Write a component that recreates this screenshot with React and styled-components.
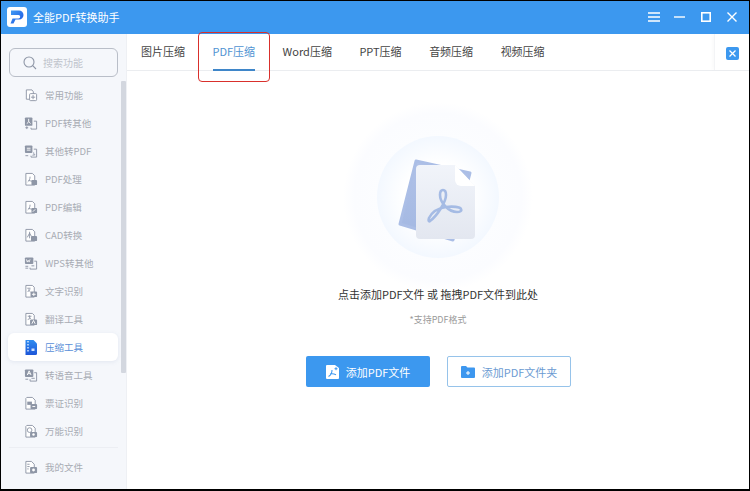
import React from 'react';
import styled, { createGlobalStyle } from 'styled-components';

const GlobalStyle = createGlobalStyle`
  html, body { margin: 0; padding: 0; background: #000; }
  * { box-sizing: border-box; }
`;

const grey = '#8e96a6';

const icons = {
  common: (
    <>
      <path d="M2.500 1.500h6l1.500 2v8h-7.500z" fill="#fff" stroke={grey} />
      <rect x="6" y="5.500" width="7.500" height="7.500" rx="1" fill="#fff" stroke={grey} />
      <path d="M7.500 9.300h4.500M9.700 7v4.500" stroke={grey} />
    </>
  ),
  pdfOut: (
    <>
      <rect x="1" y="1" width="8" height="9" rx="1" fill={grey} />
      <path d="M5 2.500v3M3 7.500c1-.500 2-1.500 2-2s1 1.500 2 2" stroke="#fff" fill="none" />
      <path d="M10.500 5h3v8.500h-6v-1.500" stroke={grey} fill="none" />
      <path d="M1.500 12h3M3 10.500v3" stroke={grey} />
    </>
  ),
  pdfIn: (
    <>
      <rect x="1" y="1" width="8" height="8" rx="1" fill={grey} />
      <path d="M3 4h4M3 6h4" stroke="#fff" />
      <path d="M10.500 5h3v8.500h-6v-1.500" stroke={grey} fill="none" />
      <path d="M11 11c-.500-1-.700-2-.700-2.500M9 11.500l3-.500" stroke={grey} fill="none" />
      <path d="M1.500 12h3" stroke={grey} />
    </>
  ),
  handle: (
    <>
      <path d="M2 1h7l2.500 2.500v10h-9.500z" fill="#fff" stroke={grey} />
      <path d="M4 10c1.500-1 2.500-3 2.500-5.500M5 8.500c1 .300 3 .800 4.500 1" stroke={grey} fill="none" />
      <rect x="8" y="8" width="6" height="5.500" rx="1" fill={grey} />
    </>
  ),
  edit: (
    <>
      <path d="M2 1h7l2.500 2.500v10h-9.500z" fill="#fff" stroke={grey} />
      <path d="M4 10c1.500-1 2.500-3 2.500-5.500M5 8.500c1 .300 3 .800 4.500 1" stroke={grey} fill="none" />
      <rect x="8" y="8" width="6" height="5.500" rx="1" fill={grey} />
      <path d="M9.500 12l2.500-2.500" stroke="#fff" />
    </>
  ),
  cad: (
    <>
      <path d="M2 1h7l2.500 2.500v10h-9.500z" fill="#fff" stroke={grey} />
      <path d="M6 3.500v7M3.500 9.500L6 5l2 3.500" stroke={grey} fill="none" />
      <rect x="7.500" y="8" width="6.500" height="5.500" rx="1" fill={grey} />
    </>
  ),
  wps: (
    <>
      <rect x="1" y="1" width="9" height="7" rx="1" fill={grey} />
      <path d="M2.500 3l1 3 1-2 1 2 1-3" stroke="#fff" fill="none" strokeWidth=".8" />
      <path d="M11 5h2.500v8.500h-7v-1.500" stroke={grey} fill="none" />
      <path d="M1.500 10.500h3M1.500 12.500h3M8 10h3" stroke={grey} />
    </>
  ),
  ocr: (
    <>
      <path d="M2 1h7l2 2v10.500h-9z" fill="#fff" stroke={grey} />
      <path d="M3.500 4h3.500M4 8l2.500-3M4.500 5.500l2.500 2.500" stroke={grey} fill="none" />
      <rect x="7" y="7.500" width="7" height="6" rx="1" fill={grey} />
      <path d="M8.500 10.500h4M10.500 8.700v3.600" stroke="#fff" />
    </>
  ),
  translate: (
    <>
      <path d="M2 1h7l2 2v10.500h-9z" fill="#fff" stroke={grey} />
      <path d="M4 4h4M6 3v3M4 7.500l3.500-1.500" stroke={grey} fill="none" />
      <rect x="6.500" y="7.500" width="7.500" height="6" rx="1" fill={grey} />
      <path d="M8.500 12l1.700-3.500 1.700 3.500" stroke="#fff" fill="none" />
    </>
  ),
  voice: (
    <>
      <rect x="1" y="1" width="9" height="8" rx="1" fill={grey} />
      <path d="M3.500 7l2-4.500 2 4.500M4.300 5.500h2.400" stroke="#fff" fill="none" />
      <path d="M11 4.500h2.500v9h-7v-2" stroke={grey} fill="none" />
      <path d="M1.500 11.500h3M8 10.500h3.500" stroke={grey} />
    </>
  ),
  ticket: (
    <>
      <path d="M3 1h6l3 3v9.500h-10v-11.500z" fill="#fff" stroke={grey} />
      <rect x="3.500" y="5.500" width="5" height="3.500" fill={grey} />
      <rect x="7" y="8" width="7" height="5.500" rx="1" fill={grey} />
      <path d="M9 10.700h3" stroke="#fff" />
    </>
  ),
  any: (
    <>
      <path d="M3 1h6l3 3v9.500h-10v-11.500z" fill="#fff" stroke={grey} />
      <circle cx="6" cy="6" r="2.500" fill="#fff" stroke={grey} />
      <rect x="6.500" y="8" width="7.500" height="5.500" rx="1" fill={grey} />
      <circle cx="10.200" cy="10.700" r="1.300" fill="#fff" />
    </>
  ),
  files: (
    <>
      <path d="M2 1h6l3 3v9.500h-9z" fill="#fff" stroke={grey} />
      <path d="M3.500 4h2.500M3.500 6.500h2.500M3.500 9h1.500" stroke={grey} />
      <rect x="6.500" y="7" width="7.500" height="6.500" rx="1" fill={grey} />
      <circle cx="10.200" cy="10.200" r="1.500" fill="#fff" />
    </>
  ),
};

const CompressIcon = () => (
  <svg width="14" height="15" viewBox="0 0 14 15">
    <defs>
      <linearGradient id="cmp" x1="0" y1="0" x2="0" y2="1">
        <stop offset="0" stopColor="#2f8cf0" />
        <stop offset="1" stopColor="#1c55d8" />
      </linearGradient>
    </defs>
    <path d="M1.500 0h8l3.500 3.500v10a1.500 1.500 0 0 1-1.500 1.500h-10z" fill="url(#cmp)" />
    <path d="M4 1v1.500M4 4v1.500M4 7v1.500M4 10v1.500" stroke="#fff" strokeWidth="1.200" />
    <path d="M7.500 8.500h3v2.500h-3z" fill="#cfe2ff" />
  </svg>
);

const navItems = [
  ['common', '常用功能'],
  ['pdfOut', 'PDF转其他'],
  ['pdfIn', '其他转PDF'],
  ['handle', 'PDF处理'],
  ['edit', 'PDF编辑'],
  ['cad', 'CAD转换'],
  ['wps', 'WPS转其他'],
  ['ocr', '文字识别'],
  ['translate', '翻译工具'],
  ['compress', '压缩工具'],
  ['voice', '转语音工具'],
  ['ticket', '票证识别'],
  ['any', '万能识别'],
];

const tabs = ['图片压缩', 'PDF压缩', 'Word压缩', 'PPT压缩', '音频压缩', '视频压缩'];

const App = () => (
  <Frame>
    <GlobalStyle />
    <TitleBar>
      <Logo viewBox="0 0 20 20">
        <defs>
          <linearGradient id="logoP" x1="0" y1="0" x2="1" y2="1">
            <stop offset="0" stopColor="#3f9bf5" />
            <stop offset="1" stopColor="#1c55e0" />
          </linearGradient>
        </defs>
        <rect width="20" height="20" rx="3" fill="#fff" />
        <path d="M4 3.500h8a4.500 4.500 0 0 1 0 9H8.500L6.500 16.500H3.500l2-5h6a1.700 1.700 0 0 0 0-3.400H4z" fill="url(#logoP)" />
      </Logo>
      <AppName>全能PDF转换助手</AppName>
      <WindowButtons>
        <Hamburger width="12" height="10" viewBox="0 0 12 10"><path d="M0 1h12M0 5h12M0 9h12" stroke="#fff" strokeWidth="1.400" /></Hamburger>
        <svg width="11" height="10" viewBox="0 0 11 10"><path d="M0 5h11" stroke="#fff" strokeWidth="1.400" /></svg>
        <svg width="10" height="10" viewBox="0 0 10 10"><rect x=".8" y=".8" width="8.400" height="8.400" fill="none" stroke="#fff" strokeWidth="1.600" /></svg>
        <svg width="10" height="10" viewBox="0 0 10 10"><path d="M.5 .5l9 9M9.500 .5l-9 9" stroke="#fff" strokeWidth="1.400" /></svg>
      </WindowButtons>
    </TitleBar>
    <Body>
      <Sidebar>
        <SearchBox>
          <svg width="14" height="14" viewBox="0 0 14 14">
            <circle cx="6" cy="6" r="5" fill="none" stroke="#8e96a6" strokeWidth="1.100" />
            <path d="M9.700 9.700l3.300 3.300" stroke="#8e96a6" strokeWidth="1.100" />
          </svg>
          <SearchText>搜索功能</SearchText>
        </SearchBox>
        <NavArea>
          <NavList>
            {navItems.map(([icon, label]) => (
              <NavItem key={label} $active={icon === 'compress'}>
                {icon === 'compress' ? (
                  <CompressIcon />
                ) : (
                  <svg width="14" height="15" viewBox="0 0 15 15">{icons[icon]}</svg>
                )}
                {label}
              </NavItem>
            ))}
          </NavList>
          <ScrollThumb />
        </NavArea>
        <SideDivider />
        <FilesRow>
          <svg width="14" height="15" viewBox="0 0 15 15">{icons.files}</svg>
          我的文件
        </FilesRow>
      </Sidebar>
      <Main>
        <TabBar>
          <Tabs>
            {tabs.map((t) => (
              <Tab key={t} $active={t === 'PDF压缩'}>
                {t}
              </Tab>
            ))}
          </Tabs>
          <CollapseCell>
            <CollapseButton>
              <svg width="7" height="7" viewBox="0 0 7 7"><path d="M.5 .5l6 6M6.500 .5l-6 6" stroke="#fff" strokeWidth="1.300" /></svg>
            </CollapseButton>
          </CollapseCell>
        </TabBar>
        <Content>
          <Illustration width="190" height="190" viewBox="0 0 190 190">
            <defs>
              <radialGradient id="outer" cx="50%" cy="50%" r="50%">
                <stop offset="0.6" stopColor="#fcfdff" />
                <stop offset="0.88" stopColor="#fbfcff" />
                <stop offset="1" stopColor="#fff" />
              </radialGradient>
              <radialGradient id="inner" cx="50%" cy="50%" r="50%">
                <stop offset="0.55" stopColor="#fff" />
                <stop offset="1" stopColor="#f3f8ff" />
              </radialGradient>
              <linearGradient id="sheet" x1="0" y1="0" x2="0" y2="1">
                <stop offset="0" stopColor="#f1f4fa" />
                <stop offset="1" stopColor="#e3e7f0" />
              </linearGradient>
              <linearGradient id="back" x1="0" y1="0" x2="0" y2="1">
                <stop offset="0" stopColor="#b0c1e7" />
                <stop offset="1" stopColor="#a3b8e2" />
              </linearGradient>
            </defs>
            <circle cx="95" cy="95" r="95" fill="url(#outer)" />
            <circle cx="95" cy="95" r="61" fill="url(#inner)" />
            <polygon points="73,59 127,71 110,138 57,122" fill="url(#back)" stroke="#abbee6" strokeWidth="3" strokeLinejoin="round" />
            <path d="M77 63H112L132 84V133a4 4 0 0 1-4 4H77a4 4 0 0 1-4-4V67a4 4 0 0 1 4-4z" fill="url(#sheet)" />
            <path d="M112 63V78a6 6 0 0 0 6 6H132z" fill="#fff" />
            <path d="M87 119C94 114 103 100 103 93C103 89 101 88 100 88C98 88 97 90 97 93C97 101 106 110 114 110C117 110 119 109 118 107C117 105 110 104 103 105C96 106 89 110 86 116C85 119 86 120 87 119Z" fill="none" stroke="#a5bbe4" strokeWidth="2.600" />
          </Illustration>
          <Hint>点击添加PDF文件 或 拖拽PDF文件到此处</Hint>
          <SubHint>*支持PDF格式</SubHint>
          <Buttons>
            <PrimaryButton>
              <svg width="13" height="14" viewBox="0 0 13 14">
                <path d="M1 0h8l4 3v10a1 1 0 0 1-1 1H1a1 1 0 0 1-1-1V1a1 1 0 0 1 1-1z" fill="#fff" />
                <path d="M2.500 11.500c2-1 3.500-3.500 3.500-6.500M4 9c2-.5 4.500 0 6 .7" stroke="#3d97ef" strokeWidth="1.100" fill="none" />
                <path d="M10 2.200v3M8.500 3.700h3" stroke="#3d97ef" />
              </svg>
              添加PDF文件
            </PrimaryButton>
            <OutlineButton>
              <svg width="14" height="12" viewBox="0 0 14 12">
                <path d="M0 1a1 1 0 0 1 1-1h4l1.500 1.500H13a1 1 0 0 1 1 1V11a1 1 0 0 1-1 1H1a1 1 0 0 1-1-1z" fill="#3d97ef" />
                <path d="M5 7h4M7 5v4" stroke="#fff" />
              </svg>
              添加PDF文件夹
            </OutlineButton>
          </Buttons>
        </Content>
      </Main>
    </Body>
  </Frame>
);

const Frame = styled.div`
  width: 750px;
  height: 491px;
  padding: 1px 1px 2px 1px;
  display: flex;
  flex-direction: column;
  background: #000;
  font-family: "Noto Sans CJK SC", "Liberation Sans", sans-serif;
  overflow: hidden;
`;

const TitleBar = styled.div`
  height: 33px;
  flex: none;
  display: flex;
  align-items: center;
  padding: 0 12px 1px 6px;
  background: #3c98ef;
`;

const Logo = styled.svg`
  width: 20px;
  height: 20px;
`;

const AppName = styled.div`
  margin-left: 6px;
  font-size: 11px;
  color: #fff;
`;

const WindowButtons = styled.div`
  margin-left: auto;
  display: flex;
  align-items: center;
  gap: 16px;
`;

const Hamburger = styled.svg`
  margin-right: -2px;
`;

const Body = styled.div`
  flex: 1;
  min-height: 0;
  display: flex;
  background: #fff;
`;

const Sidebar = styled.div`
  width: 125px;
  flex: none;
  display: flex;
  flex-direction: column;
  padding-top: 14px;
  background: #f5f7fb;
`;

const SearchBox = styled.div`
  width: 109px;
  height: 29px;
  margin-left: 8px;
  flex: none;
  display: flex;
  align-items: center;
  gap: 6px;
  padding-left: 13px;
  border: 1px solid #b9bec8;
  border-radius: 6px;
`;

const SearchText = styled.span`
  font-size: 10px;
  color: #c0c4cc;
`;

const NavArea = styled.div`
  position: relative;
  margin-top: 4px;
  flex: none;
`;

const NavList = styled.div`
  display: flex;
  flex-direction: column;
`;

const NavItem = styled.div`
  width: 110px;
  height: 28px;
  margin-left: 7px;
  display: flex;
  align-items: center;
  gap: 7px;
  padding-left: 16px;
  font-size: 9.500px;
  border-radius: 6px;
  color: ${({ $active }) => ($active ? '#5a8fd8' : '#a8acb4')};
  background: ${({ $active }) => ($active ? '#fff' : 'transparent')};
  box-shadow: ${({ $active }) => ($active ? '0 1px 4px rgba(120,140,180,.15)' : 'none')};
`;

const ScrollThumb = styled.div`
  position: absolute;
  left: 120px;
  top: 0;
  width: 5px;
  height: 292px;
  background: #d3d7df;
  border-radius: 1px;
`;

const SideDivider = styled.div`
  margin: 2px 8px 0;
  height: 1px;
  background: #eceef3;
`;

const FilesRow = styled(NavItem)`
  margin-top: 5px;
`;

const Main = styled.div`
  flex: 1;
  min-width: 0;
  display: flex;
  flex-direction: column;
  border-left: 1px solid #eef0f4;
`;

const TabBar = styled.div`
  height: 37px;
  flex: none;
  display: flex;
  border-bottom: 1px solid #ebedf0;
`;

const Tabs = styled.div`
  flex: 1;
  display: flex;
  gap: 27.500px;
  padding-left: 14px;
`;

const Tab = styled.div`
  position: relative;
  height: 37px;
  padding-top: 9px;
  font-size: 11px;
  line-height: 16px;
  white-space: nowrap;
  color: ${({ $active }) => ($active ? '#4f93d2' : '#444')};
  border-bottom: ${({ $active }) => ($active ? '2px solid #3f86c9' : 'none')};

  ${({ $active }) =>
    $active &&
    `
    &::after {
      content: '';
      position: absolute;
      left: -14.500px;
      right: -15px;
      top: -2px;
      height: 48px;
      border: 1.500px solid #d9302c;
      border-radius: 4px;
      z-index: 2;
    }
  `}
`;

const CollapseCell = styled.div`
  width: 35px;
  display: flex;
  align-items: center;
  justify-content: center;
  padding-top: 2px;
  padding-left: 1px;
  border-left: 1px solid #f3f4f6;
  box-shadow: -2px 0 3px rgba(0, 0, 0, 0.02);
`;

const CollapseButton = styled.div`
  width: 13px;
  height: 13px;
  display: flex;
  align-items: center;
  justify-content: center;
  background: #3c98ef;
  border-radius: 2px;
`;

const Content = styled.div`
  flex: 1;
  display: flex;
  flex-direction: column;
  align-items: center;
  padding-top: 31px;
`;

const Illustration = styled.svg`
  display: block;
  flex: none;
  margin-bottom: -6px;
`;

const Hint = styled.div`
  position: relative;
  font-size: 11px;
  line-height: 16px;
  color: #333;
`;

const SubHint = styled.div`
  margin-top: 11px;
  font-size: 9px;
  line-height: 14px;
  color: #9a9a9a;
`;

const Buttons = styled.div`
  margin-top: 29px;
  padding-left: 1px;
  display: flex;
  gap: 17px;
`;

const PrimaryButton = styled.div`
  width: 124px;
  height: 31px;
  display: flex;
  align-items: center;
  justify-content: center;
  gap: 7px;
  font-size: 11px;
  color: #fff;
  background: #3c98ef;
  border-radius: 2px;
`;

const OutlineButton = styled(PrimaryButton)`
  color: #6b9bd2;
  background: #fff;
  border: 1.500px solid #96c3ea;
`;

export default App;
